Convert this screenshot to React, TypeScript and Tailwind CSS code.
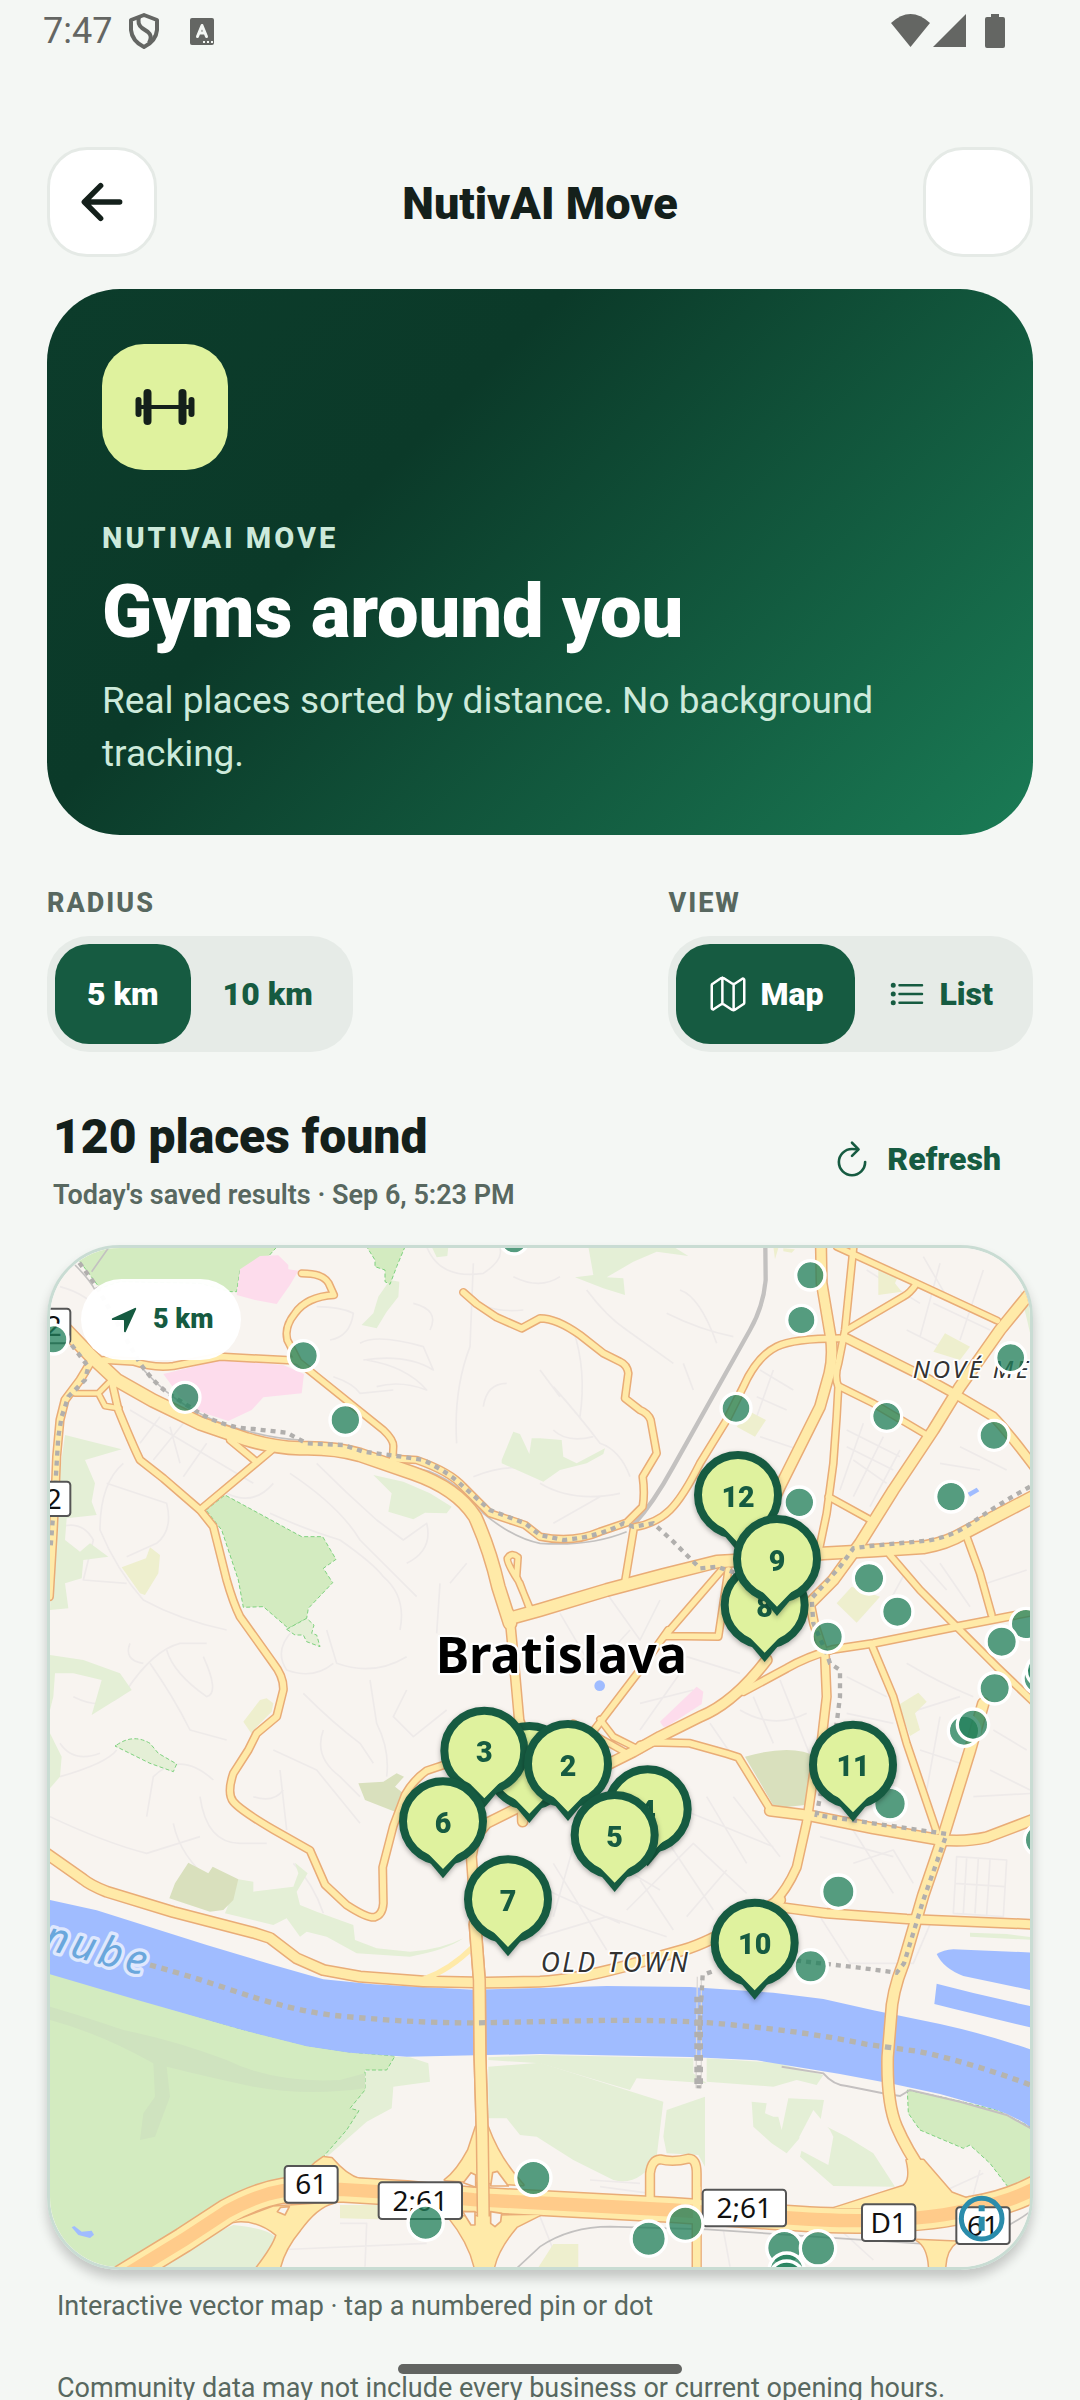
import { useState } from 'react';
import {
  IoArrowBack,
  IoListOutline,
  IoMapOutline,
  IoNavigate,
  IoRefreshOutline,
} from 'react-icons/io5';

interface Pin {
  n: number;
  x: number;
  y: number;
}

// w is the inner width of the road, the casing is drawn a little wider
interface Road {
  d: string;
  w: number;
}

const roads: Road[] = [
  { w: 19, d: 'M150 400 L120 450 L75 510 L60 570 L50 680 L45 800 L40 900 L28 1100' },
  { w: 13, d: 'M105 490 L175 490 L212 452 M175 490 L195 528 L238 535' },
  { w: 18, d: 'M218 465 L235 540 Q280 650 300 690 L370 745 L480 840 L520 890 L560 1050 Q580 1120 600 1160 L700 1300 Q732 1340 730 1380 L710 1460 L650 1510 L625 1560 L580 1630 Q560 1690 580 1715 Q600 1740 700 1799 L810 1861 L855 1964 L920 2025 Q980 2064 1003 2062 Q1028 2055 1030 2020 L1028 1912 L1060 1788 L1095 1695 Q1120 1650 1160 1622 L1220 1602' },
  { w: 17, d: 'M480 840 L695 660 M645 692 L570 630' },
  { w: 17, d: 'M190 390 L280 395 Q340 415 400 408 L540 380 L770 392' },
  { w: 16, d: 'M785 130 Q850 130 866 160 L882 195 Q800 200 765 250 Q732 290 742 330 L775 395 L1030 600 Q1062 630 1060 650 L1058 690' },
  { w: 17, d: 'M1058 686 L1130 690 Q1230 725 1270 770 L1350 850 L1455 885 L1500 920 Q1600 940 1680 905 L1760 878 L1808 830 Q1815 790 1808 740 L1850 670 L1832 570 Q1825 550 1800 540 L1755 505 L1765 430 Q1762 405 1740 395 L1690 370 L1620 315 Q1550 265 1500 265 L1445 295 L1370 262 L1310 222 L1270 187' },
  { w: 15, d: 'M1468 1135 L1440 1060 Q1400 1000 1402 985 Q1415 965 1434 982 L1430 1040 L1470 1135' },
  { w: 17, d: 'M2400 325 Q2260 325 2210 350 Q2150 380 2110 470 L2060 570 L1980 700 Q1930 800 1890 840 Q1850 880 1782 892 L1755 1055' },
  { w: 16, d: 'M2390 50 L2620 155 L2872 272 M2630 160 Q2610 190 2590 200 L2420 300' },
  { w: 17, d: 'M2440 54 L2415 300 L2395 400 Q2382 440 2395 470 L2390 560 L2380 700 L2360 850 L2335 970' },
  { w: 16, d: 'M2395 468 L2500 520 L2655 612 M2365 800 L2492 870' },
  { w: 17, d: 'M2550 975 L2640 1080 L2750 1190 L2870 1310 L2990 1425' },
  { w: 17, d: 'M2780 920 L2820 1030 L2855 1155' },
  { w: 19, d: 'M2990 1143 L2750 1190 L2500 1240 L2380 1258 Q2300 1280 2240 1315 L2110 1385' },
  { w: 17, d: 'M2495 1245 L2560 1400 L2600 1540 L2690 1805' },
  { w: 17, d: 'M1875 1218 L2035 1220 L2065 1020 M1868 1225 L2045 1020 M1885 1200 L1800 1320 L1655 1510' },
  { w: 15, d: 'M1680 1468 L1720 1520 L1800 1560 M1600 1480 L1770 1575 L1840 1537' },
  { w: 18, d: 'M1800 1545 L1840 1537 L1950 1540 L2060 1571 L2095 1582 L2195 1745' },
  { w: 22, d: 'M1830 2904 L1830 2830 Q1835 2790 1860 2788 Q1900 2798 1945 2786 Q1970 2785 1970 2830 L1970 3120' },
  { w: 26, d: 'M1440 1480 L1448 1775 M1440 1730 L1340 1780 Q1300 1820 1294 1880 L1310 2100' },
  { w: 24, d: 'M2210 2030 L2360 2050 L2600 2067 L2980 2083' },
  { w: 28, d: 'M2190 1742 L2310 1757 L2500 1795 L2690 1828 Q2770 1838 2840 1822 L2990 1765' },
  { w: 22, d: 'M2310 1120 L2322 1180 L2355 1280 L2360 1400 L2345 1530 L2320 1640 L2300 1778 L2270 1912 Q2240 1980 2200 2020' },
  { w: 28, d: 'M2220 2010 L2120 2070 Q2000 2140 1930 2160 L1750 2210 Q1600 2250 1500 2255 L1340 2258 L1150 2254 L960 2240 L850 2220 L770 2185 L690 2124 L640 2108 L400 2046 L200 1985 Q150 1965 130 1948 L20 1871' },
  { w: 28, d: 'M2180 1290 Q2080 1420 1980 1460 L1860 1520 L1780 1565 L1690 1610' },
  { w: 28, d: 'M2343 50 L2345 160 L2372 320 Q2380 380 2368 430 L2340 530 L2280 650 L2220 770 L2170 880' },
  { w: 23, d: 'M2420 325 L2500 365 L2650 440 L2750 495 L2860 560 Q2900 600 2990 720' },
  { w: 30, d: 'M2990 165 L2880 300 L2760 470 L2680 600 L2560 780 L2460 940 L2380 1050 L2300 1130' },
  { w: 34, d: 'M1410 1165 L1500 1140 L1700 1080 L1870 1035 L2030 995 L2200 985 L2350 970 L2500 962 L2650 952 Q2720 940 2770 910 L2990 795' },
  { w: 36, d: 'M78 300 L150 375 L230 450 L340 512 L480 580 L620 628 Q700 652 780 655 Q880 652 960 675 L1120 730 Q1250 775 1305 860 Q1350 960 1375 1070 L1410 1180' },
  { w: 24, d: 'M1408 1150 L1425 1330 L1442 1520' },
  { w: 30, d: 'M2830 1420 L2790 1561 L2710 1819 L2650 1995 L2590 2201 Q2555 2290 2553 2360 L2543 2480 Q2540 2620 2570 2690 Q2600 2760 2650 2830' },
];

const motorway =
  'M250 3140 L430 3030 L560 2945 Q650 2895 730 2882 L900 2878 L1100 2890 L1300 2909 L1500 2919 L1900 2940 L2200 2961 Q2400 2975 2500 2971 Q2700 2965 2800 2935 Q2900 2920 2990 2873';

const bridge = 'M1305 2080 L1318 2250 L1320 2480 L1327 2720 L1330 2960';

const junctions = [
  'M1308 2690 L1285 2760 Q1250 2825 1215 2850 L1450 2865 Q1380 2790 1343 2690 Z',
  'M1225 2960 Q1290 3040 1306 3120 L1360 3120 Q1370 3060 1430 2990 L1500 2955 Z',
  'M825 2800 L850 2782 L875 2785 Q920 2838 960 2848 L1010 2850 L900 2880 L740 2880 Z',
  'M580 2975 Q650 2965 710 3015 Q700 3050 645 3120 L718 3120 Q730 3060 780 3000 Q830 2930 880 2918 L700 2930 Z',
  'M2600 2790 Q2615 2850 2590 2868 L2520 2890 L2380 2935 L2860 2935 L2735 2888 L2650 2790 Z',
  'M2630 3030 Q2666 3050 2668 3120 L2715 3120 Q2715 3060 2750 3035 Z',
];

const junctionHoles = [
  'M1270 2858 L1293 2828 L1307 2835 L1307 2872 Z',
  'M1352 2868 L1358 2828 L1372 2824 L1405 2868 Z',
  'M1268 2945 L1305 2945 L1305 2985 L1293 2985 Z',
  'M1352 2945 L1385 2950 L1382 2975 L1365 2990 L1352 2980 Z',
  'M712 2945 L722 2932 L748 2930 L735 2955 Z',
];

const tramLines = [
  'M95 345 L145 410 L135 450 L85 500 L65 560 L55 620 L50 700 L46 770 L32 950',
  'M118 98 L170 170 L300 400 Q350 470 400 500 L480 550 Q560 595 640 597 L740 608 L800 640 L910 645 L970 665 L1070 678 L1150 690 Q1230 730 1270 770 L1350 840 L1455 880 L1500 915 L1570 930 Q1680 920 1750 880 L1780 890 L1840 880 L1900 935 L1980 1015 L2030 1010 L2090 1030',
  'M2970 770 Q2880 820 2800 875 Q2740 920 2660 932 L2490 948 L2440 955 L2400 1010 L2315 1105 L2320 1180 L2360 1270 L2370 1300 L2400 1320 L2400 1400 L2390 1480 L2340 1700 L2330 1755 L2500 1780 L2720 1812 L2650 2010 L2592 2200 L2570 2228 L2450 2212 L2270 2192',
  'M2015 2225 L1988 2235 L1980 2380 L1976 2575',
];

const riverLine =
  'M330 2205 Q440 2235 560 2275 Q760 2345 900 2358 Q1150 2382 1340 2378 L1700 2371 Q1950 2370 2080 2385 Q2300 2405 2480 2443 L2640 2465 Q2800 2500 2980 2568';

const lanes = [
  'M60 170 Q140 190 200 260 M260 330 L240 380 M830 230 Q900 230 940 250 Q930 320 870 330 M960 340 Q1010 310 1150 350 L1180 420 Q1100 370 970 390 M980 390 Q1100 410 1160 480 Q1080 450 1010 470 M1300 100 L1290 350 Q1240 480 1250 640',
  'M1160 50 Q1200 150 1330 130 Q1390 90 1380 55 M1420 140 Q1500 180 1560 140 M1300 200 Q1340 250 1450 240 M880 440 Q940 460 960 490 L1060 480 M1120 220 Q1200 240 1170 300 M1330 530 Q1340 460 1400 460 M1300 740 Q1400 700 1460 720',
  'M270 540 L640 760 M300 640 L360 560 M340 690 L430 580 M430 740 L500 640 M390 590 L420 700 M250 700 Q180 760 180 900 Q230 1020 310 1110 Q420 1170 560 1200 M200 760 L380 820 Q400 900 350 940 L260 980',
  'M560 790 Q640 830 700 760 M690 850 Q800 900 900 930 Q1000 1000 1030 1040 Q1100 1100 1080 1200 M750 730 Q900 830 960 930 L1130 1100 M830 700 Q920 790 1010 870 L1090 930 L1160 880 Q1180 960 1100 1000 M860 1200 L890 1300 Q1000 1340 1100 1280 M1200 1060 L1190 1210 M1280 1000 L1230 1060',
  'M40 900 Q120 860 160 930 L130 1050 L260 1060 M100 1400 Q200 1450 260 1380 Q340 1260 420 1240 L500 1240 M270 1240 Q250 1290 310 1300 M380 1260 Q400 1330 500 1400 Q540 1390 490 1280 M330 1300 Q400 1400 450 1500 L560 1530',
  'M760 1200 Q700 1260 740 1320 Q820 1350 880 1300 M790 1390 Q880 1480 960 1540 L1000 1600 M850 1500 Q820 1580 900 1640 L960 1700 M990 1350 L1010 1480 Q1050 1560 1040 1640 M1100 1380 L1060 1460 L1120 1520 L1220 1440 M700 1560 L830 1620 L960 1780 M640 1700 Q700 1720 730 1680',
  'M60 1540 Q100 1600 180 1570 M60 1640 Q200 1600 230 1560 M30 1760 Q200 1840 320 1870 L480 1820 M320 1760 L340 1640 Q420 1560 520 1650 M400 1780 Q420 1880 520 1960 L620 2000 M480 1700 Q500 1840 600 1840 L680 1840 M720 1620 L740 1800 M760 1900 Q820 1960 850 2050',
  'M1540 470 Q1620 560 1680 640 Q1740 660 1770 740 M1500 420 L1560 500 M1600 300 Q1640 420 1620 560 M1540 600 Q1580 640 1660 620 M1640 180 Q1700 260 1760 300 L1900 400 M1920 180 Q1980 200 2030 340 M1880 250 Q1980 300 2080 320 M1930 400 L1960 480',
  'M1500 760 Q1600 820 1740 790 M1540 880 L1680 800 M2160 420 L2260 480 M2150 500 L2240 540 M2200 420 L2150 560 M2160 620 L2280 660 M2420 600 L2580 680 M2420 650 L2560 720 M2440 690 L2540 760 M2470 580 L2400 780 M2530 620 L2440 800 M2580 660 L2490 830',
  'M2480 120 L2640 220 M2600 300 L2760 380 M2650 80 L2720 200 M2700 100 L2640 320 M2830 120 L2760 330 M2680 220 L2850 300 M2700 700 L2820 720 M2760 650 L2900 720 M2700 1000 L2790 1130 M2640 990 L2720 1080 M2840 1060 L2960 1020 M2600 1020 L2540 1130',
  'M1560 1150 L1660 1320 L1770 1200 M1700 1090 L1800 1230 L1860 1110 M1600 1300 L1740 1240 M1920 1330 L1800 1500 M1940 1280 L2100 1330 M1960 1380 L1800 1420 M2100 1440 Q2200 1500 2300 1450 M2140 1400 L2200 1540 M2220 1350 L2320 1600 M2010 1480 L2120 1640',
  'M2420 1340 L2540 1400 M2420 1450 L2560 1480 M2600 1300 Q2700 1360 2800 1400 M2600 1450 L2760 1400 M2640 1560 L2760 1600 M2700 1460 L2660 1680 M2860 1500 L2960 1560 M2850 1620 L2970 1680 M2800 1700 L2980 1690 M2440 1900 L2560 1860 L2620 1960',
  'M1640 1850 L1860 1980 M1700 1900 L1900 1780 M1760 2040 L1960 1840 L2120 1990 M1860 1800 L2020 2040 M1930 1740 L2200 1850 M2000 1700 L2120 1900 M2080 1700 L2220 1880 M1520 1980 L1740 2080 M1540 1900 L1700 2160 M1600 1850 L1540 2060 M1500 2120 L1700 2060 L1880 2120 M1800 1950 L1900 2100 M2060 1920 L1940 2060',
  'M2750 1880 L2900 1890 L2890 2060 L2740 2050 Z M2780 1885 L2770 2050 M2815 1885 L2805 2050 M2850 1888 L2840 2055 M2745 1960 L2895 1970 M2340 2060 L2430 2200 L2620 2200 L2680 2060 M2420 1770 L2560 1990 M2340 1820 L2560 1880',
  'M1370 2900 L1500 2960 L1560 3110 M900 2980 L980 2980 L975 3110 M700 3060 L1160 3040 M1650 2850 L1800 2860 M1680 2870 L1830 2890 M2050 3000 L2070 3110 M2390 2990 L2500 3090 M2820 2820 L2790 2930 M2720 2880 L2830 2830',
];

const dots: number[][] = [
  [40, 328, 40], [435, 502, 41], [790, 377, 41], [916, 570, 42], [1422, 30, 38],
  [2311, 136, 40], [2284, 270, 40], [2088, 535, 41], [2540, 559, 41], [2912, 383, 41],
  [2862, 616, 41], [2278, 817, 42], [2733, 800, 42], [2487, 1045, 43], [2572, 1145, 43],
  [2363, 1220, 43], [2958, 1182, 43], [2885, 1235, 43], [2996, 1345, 43], [3006, 1322, 43],
  [2864, 1375, 43], [2772, 1502, 43], [2799, 1484, 43], [2550, 1721, 45], [3002, 1830, 45],
  [2395, 1985, 46], [2312, 2209, 46], [1480, 2844, 49], [1157, 2978, 49], [1826, 3026, 49],
  [1936, 2981, 49], [2233, 3054, 49], [2334, 3055, 49], [2240, 3122, 49], [2240, 3146, 49],
];

const pins: Pin[] = [
  { n: 12, x: 2094, y: 795 },
  { n: 8, x: 2174, y: 1125 },
  { n: 9, x: 2211, y: 987 },
  { n: 11, x: 2439, y: 1604 },
  { n: 4, x: 1823, y: 1738 },
  { n: 1, x: 1468, y: 1608 },
  { n: 3, x: 1333, y: 1562 },
  { n: 2, x: 1584, y: 1602 },
  { n: 6, x: 1209, y: 1774 },
  { n: 5, x: 1724, y: 1815 },
  { n: 7, x: 1404, y: 2008 },
  { n: 10, x: 2144, y: 2138 },
];

const shields = [
  { label: '2', x: -8, y: 236, w: 99, h: 104 },
  { label: '2', x: -8, y: 755, w: 99, h: 103 },
  { label: '61', x: 734, y: 2808, w: 159, h: 110 },
  { label: '2;61', x: 1016, y: 2857, w: 250, h: 110 },
  { label: '2;61', x: 1988, y: 2879, w: 250, h: 110 },
  { label: 'D1', x: 2466, y: 2923, w: 160, h: 110 },
  { label: '61', x: 2749, y: 2932, w: 160, h: 110 },
];

function CityMap() {
  return (
    <svg
      viewBox="30 54 2940 3057"
      preserveAspectRatio="xMidYMid slice"
      className="block h-full w-full"
      role="img"
      aria-label="Map of Bratislava"
    >
      <rect x="0" y="0" width="3040" height="3200" fill="#f8f4f0" />

      <g fill="none" stroke="#eeeae9" strokeWidth="5" strokeLinejoin="round">
        {lanes.map((d, i) => (
          <path key={i} d={d} />
        ))}
      </g>

      {/* woods */}
      <g fill="#e4efd6">
        <path d="M1645 50 L1660 135 L1605 142 L1690 175 L1755 195 L1750 145 L1700 142 L1780 95 L1850 65 L1945 78 L1900 50 Z" />
        <path d="M1050 150 L1078 155 L1075 200 L1040 245 L1010 295 L965 285 L1000 250 L1015 200 Z" />
        <path d="M1175 50 L1225 50 L1222 78 L1190 82 Z" />
        <path d="M1385 690 L1420 605 L1440 612 L1468 672 L1475 625 L1500 625 L1565 630 L1570 680 L1610 700 L1695 655 L1690 672 L1640 700 L1560 720 L1510 755 L1385 700 Z" />
        <path d="M1000 735 L1090 755 L1170 790 L1235 830 L1220 850 L1155 848 L1120 868 L1045 845 L1055 790 Z" />
        <path d="M75 615 L245 658 L135 690 L165 760 L155 815 L170 855 L80 865 L75 930 L120 965 L150 940 L205 980 L130 990 L125 1045 L75 1060 L85 1135 L30 1140 L40 860 Z" />
        <path d="M30 1275 L130 1290 L240 1330 L275 1380 L155 1455 L185 1350 L100 1330 L45 1330 L40 1400 L30 1440 Z" />
        <path d="M30 1510 L65 1580 L60 1640 L30 1675 Z" />
        <path d="M595 1948 L640 1955 L640 1985 L760 1970 L775 1930 L765 1898 L803 1930 L770 1985 L780 2025 L830 2045 L940 2085 L945 2130 L1010 2155 L1110 2165 Q1200 2160 1270 2125 Q1220 2160 1110 2180 L950 2170 L860 2120 L800 2105 L780 2120 L740 2065 L700 2085 L555 2050 Z" />
        <path d="M2940 180 L2990 240 L2975 330 Z" />
        <path d="M2790 2108 L2900 2112 L2980 2122 L2980 2130 L2790 2120 Z" />
        <path d="M1345 2482 L1500 2475 L1960 2485 L1960 2530 L2000 2560 L1790 2545 L1770 2580 L1500 2500 L1345 2490 Z" />
        <path d="M2000 2485 L2210 2498 L2350 2535 L2330 2565 L2270 2550 L2200 2570 L2000 2555 Z" />
        <path d="M1345 2510 L1500 2498 L1870 2615 L1850 2780 Q1800 2870 1720 2850 L1600 2790 L1490 2720 L1440 2715 L1400 2665 L1345 2665 Z" />
        <path d="M1880 2640 L1995 2600 L1995 2810 L1975 2775 L1880 2770 L1870 2720 Z" />
        <path d="M2135 2615 L2180 2620 L2175 2650 L2200 2660 L2215 2660 L2225 2700 L2245 2605 L2352 2610 L2340 2680 L2420 2720 L2500 2770 L2565 2870 L2380 2868 L2280 2780 L2300 2700 L2240 2770 L2195 2740 L2140 2690 Z" />
        <path d="M1065 2480 L1110 2482 L1165 2500 L1170 2555 L1060 2570 L1055 2635 L980 2675 L850 2790 L970 2530 Z" />
        <path d="M580 2985 Q680 2995 705 3020 Q690 3060 640 3120 L340 3120 L480 3030 Z" />
      </g>

      {/* fields and pitches */}
      <g fill="#eeefce">
        <path d="M245 1012 L318 985 L330 952 L360 975 L355 1030 L315 1095 L300 1090 Z" />
        <path d="M610 1475 L660 1410 L680 1405 L700 1420 L695 1445 L650 1490 L635 1512 Z" />
        <path d="M2515 115 L2580 125 L2565 160 L2585 185 L2515 195 Z" />
        <path d="M2680 365 L2715 310 L2790 350 L2760 390 Z" />
        <path d="M2090 590 L2130 545 L2178 570 L2145 620 Z" />
        <path d="M2390 1120 L2435 1070 L2520 1100 L2450 1178 Z" />
        <path d="M2575 1425 L2635 1388 L2660 1415 L2625 1450 L2640 1500 L2610 1518 Z" />
        <path d="M2200 50 L2215 55 L2205 88 Z M2230 55 L2265 58 L2255 68 L2230 64 Z" />
        <path d="M900 2925 L1015 2925 L1015 2968 L900 2965 Z" />
        <path d="M1540 3042 L1615 3042 L1615 3120 L1490 3120 Z" />
      </g>
      <path d="M2278 2720 L2320 2640 L2370 2700 L2380 2720 L2365 2805 L2280 2760 Z" fill="#f8f4f0" />

      {/* cemeteries */}
      <g fill="#d9e0bd">
        <path d="M445 1898 L505 1930 L518 1910 L595 1948 L580 2010 L550 2040 L510 2045 L388 2005 L405 1960 Z" />
        <path d="M955 1660 L1030 1655 L1070 1630 L1092 1640 L1065 1670 L1090 1690 L1065 1745 L975 1710 Z" />
        <path d="M2115 1580 Q2220 1550 2290 1565 L2320 1575 L2295 1725 L2205 1735 L2150 1640 Z" />
      </g>

      {/* parks */}
      <g fill="#d3ebc0" stroke="#7fd17f" strokeWidth="3" strokeDasharray="12 7">
        <path d="M90 40 L720 40 L680 85 L600 120 L590 185 L570 185 L480 160 L240 155 L180 175 L120 95 Z" />
        <path d="M980 50 L1095 50 L1070 110 L1050 163 L1035 155 L1035 120 L1005 110 L1005 90 Z" />
        <path d="M498 840 L555 795 L785 920 L848 920 L888 988 L850 1015 L878 1058 L805 1135 L800 1165 L745 1195 L670 1130 L610 1132 L595 1050 L545 900 Z" />
        <path d="M740 1198 L800 1165 L822 1185 L815 1210 L830 1215 L840 1250 L800 1235 L790 1215 L765 1215 Z" fill="#e4efd6" />
        <path d="M230 1545 Q280 1510 330 1540 L355 1570 L410 1602 L400 1625 L330 1600 L225 1548 Z" fill="#e4efd6" />
        <path d="M20 2225 L300 2308 L600 2396 L800 2446 L930 2466 L1065 2478 L1040 2520 L975 2520 L975 2580 L930 2635 L957 2642 L920 2700 L850 2780 L800 2860 L560 2945 L250 3140 L20 3140 Z" />
        <path d="M2602 2580 L2700 2600 L2870 2640 L2990 2700 L2990 2860 L2915 2885 L2850 2800 L2790 2745 L2770 2755 L2640 2700 L2605 2650 Z" />
      </g>
      <path
        d="M30 2330 Q150 2365 250 2400 Q400 2430 560 2490 Q700 2560 900 2550 L975 2530 L975 2575 Q800 2600 640 2570 Q500 2540 380 2510 L390 2600 L345 2720 L300 2730 L310 2650 L345 2600 L340 2500 Q180 2410 30 2370 Z"
        fill="#cfe3bf"
      />

      {/* hospitals */}
      <g fill="#fddcec">
        <path d="M600 118 L660 78 L715 76 L745 105 L745 118 L775 122 L750 165 L710 222 L645 210 L590 195 Z" />
        <path d="M370 432 L480 405 L540 388 L730 405 L792 432 L785 490 L670 502 L635 540 L565 573 L480 545 L420 500 Z" />
        <path d="M1860 1475 L1970 1370 L1990 1385 L1985 1422 L1880 1490 L1870 1490 Z" />
      </g>

      {/* water */}
      <g fill="#a0bcff">
        <path d="M20 2008 L170 2041 L500 2145 L700 2205 L850 2248 L1000 2263 L1300 2279 L1500 2274 L1700 2268 L1950 2271 L2200 2288 L2350 2307 L2500 2341 L2700 2382 Q2850 2415 2990 2465 L2990 2705 Q2940 2665 2870 2640 L2700 2592 L2560 2562 L2400 2532 L2150 2491 L1950 2481 L1500 2472 L1100 2480 L930 2468 L800 2449 L600 2398 L300 2312 L20 2230 Z" />
        <path d="M2690 2172 Q2710 2160 2740 2158 L2990 2168 L2990 2284 L2770 2238 Q2710 2215 2690 2172 Z" />
        <path d="M2690 2261 L2800 2289 L2990 2333 L2990 2397 L2740 2336 L2683 2322 Z" />
        <circle cx="1679" cy="1367" r="16" />
        <path d="M2783 788 L2810 773 L2818 784 L2790 800 Z" />
        <path d="M95 2992 L103 2988 L125 3005 L155 3002 L162 3014 L150 3024 L115 3015 Z" />
      </g>
      <path d="M2225 2510 L2350 2530 Q2380 2565 2420 2568 L2540 2592 L2580 2598 L2610 2580 L2760 2615 L2900 2655 L2990 2705" fill="none" stroke="#c4c0c0" strokeWidth="6" />

      {/* railways */}
      <g fill="none" stroke="#c3c1c0">
        <path d="M205 54 L155 125 M105 105 Q150 150 165 180 M290 395 Q400 530 560 585 Q680 625 780 630 M1070 700 L1170 725 Q1260 760 1330 850 Q1420 925 1500 940 Q1650 950 1760 905" strokeWidth="5" />
        <path d="M2176 50 L2177 150 Q2170 230 2130 300 L1900 710 Q1840 820 1780 885" strokeWidth="13" />
        <path d="M1430 3115 L1500 3050 Q1590 2990 1710 2990 L2000 2998 L2400 3025 L2700 3045 Q2850 3040 2990 2930" strokeWidth="5" />
        <path d="M1972 2240 L1968 2575 M1984 2240 L1984 2575" stroke="#ddd9d6" strokeWidth="4" />
      </g>

      {/* roads: casings first so that the crossings stay open */}
      <g fill="none" stroke="#e9ac77" strokeLinejoin="round" strokeLinecap="round">
        {roads.map((r, i) => (
          <path key={i} d={r.d} strokeWidth={r.w + 9} />
        ))}
        <path d={motorway} strokeWidth="80" />
        <g strokeWidth="9">
          {junctions.map((d, i) => (
            <path key={i} d={d} />
          ))}
        </g>
        <path d={bridge} strokeWidth="40" />
      </g>
      <g fill="none" stroke="#ffeaa8" strokeLinejoin="round" strokeLinecap="round">
        {roads.map((r, i) => (
          <path key={i} d={r.d} strokeWidth={r.w} />
        ))}
        <path d="M1150 2248 Q1230 2220 1300 2150" strokeWidth="16" />
        <path d={motorway} strokeWidth="71" />
      </g>
      <g fill="#ffeaa8">
        {junctions.map((d, i) => (
          <path key={i} d={d} />
        ))}
      </g>
      <path d={motorway} fill="none" stroke="#ffcb8a" strokeWidth="40" />
      <path d={bridge} fill="none" stroke="#e9ac77" strokeWidth="40" />
      <path d={bridge} fill="none" stroke="#ffeaa8" strokeWidth="31" strokeLinecap="round" />
      <path d="M1970 2870 L1970 3120" fill="none" stroke="#ffeaa8" strokeWidth="22" />
      <g fill="#f8f4f0" stroke="#e9ac77" strokeWidth="5" strokeLinejoin="round">
        {junctionHoles.map((d, i) => (
          <path key={i} d={d} />
        ))}
      </g>

      <g fill="none" stroke="#b1afad" strokeWidth="13" strokeDasharray="15 15">
        {tramLines.map((d, i) => (
          <path key={i} d={d} />
        ))}
      </g>
      <path d="M1976 2300 L1976 2575" fill="none" stroke="#b1afad" strokeWidth="26" strokeDasharray="17 18" />
      <path d={riverLine} fill="none" stroke="#b6b4ae" strokeWidth="16" strokeDasharray="19 17" />

      {/* road shields */}
      <g fontFamily="'Noto Sans', sans-serif" fontSize="84" textAnchor="middle">
        {shields.map((s, i) => (
          <g key={i}>
            <rect x={s.x} y={s.y} width={s.w} height={s.h} rx="10" fill="#fff" stroke="#555" strokeWidth="6" />
            <text x={s.x + s.w / 2} y={s.y + s.h / 2 + 30} fill="#111">
              {s.label}
            </text>
          </g>
        ))}
      </g>

      {/* place names */}
      <g fontFamily="'Noto Sans', sans-serif" stroke="#fff" strokeLinejoin="round" paintOrder="stroke">
        <text x="1187" y="1330" fontSize="151" fontWeight="700" fill="#000" strokeWidth="14">
          Bratislava
        </text>
        <g fontStyle="italic">
          <text x="2618" y="444" fontSize="73" letterSpacing="8" fill="#333" strokeWidth="10">
            NOVÉ MESTO
          </text>
          <text x="1502" y="2226" fontSize="79" letterSpacing="8" fill="#333" strokeWidth="10">
            OLD TOWN
          </text>
          <text
            transform="translate(320 2240) rotate(15)"
            fontSize="124"
            letterSpacing="12"
            textAnchor="end"
            fill="#6aa7dc"
            stroke="#dfe8fd"
            strokeWidth="20"
          >
            Danube
          </text>
        </g>
      </g>

      {/* remaining places */}
      {dots.map(([x, y, r], i) => (
        <g key={i}>
          <circle cx={x} cy={y} r={r} fill="#217f5b" fillOpacity="0.76" />
          <circle cx={x} cy={y} r={r + 4} fill="none" stroke="#fff" strokeWidth="10" />
        </g>
      ))}

      {/* nearest places, numbered */}
      <g fontFamily="Roboto, sans-serif" fontSize="86" fontWeight="900" textAnchor="middle">
        {pins.map((p) => (
          <g
            key={p.n}
            transform={`translate(${p.x} ${p.y})`}
            className="cursor-pointer drop-shadow-[0_6px_8px_rgba(0,0,0,0.3)]"
          >
            <path d="M-56 104 L0 171 L56 104 Z" fill="#165b41" />
            <circle r="120" fill="#dff29e" stroke="#165b41" strokeWidth="24" />
            <path d="M-50 92 L-37 105 L0 143 L37 105 L50 92 Z" fill="#dff29e" />
            <text y="35" fill="#165b41">
              {p.n}
            </text>
          </g>
        ))}
      </g>

      <g fill="none" stroke="#2a8cab">
        <circle cx="2825" cy="2966" r="61" strokeWidth="15" />
        <path d="M2825 2960 L2825 3002" strokeWidth="18" />
        <path d="M2825 2926 L2825 2944" strokeWidth="18" />
      </g>
    </svg>
  );
}

function StatusBar() {
  return (
    <div className="flex h-[62px] items-center px-[43px] text-[#646663]">
      <span className="text-[36px] leading-[62px]">7:47</span>
      <svg viewBox="0 0 30 36" className="ml-[17px] h-9 w-[30px]" fill="none" stroke="currentColor" strokeWidth="4" strokeLinejoin="round">
        <path d="M15 2 L28 7 V17 Q27 28 15 34 Q3 28 2 17 V7 Z" />
        <path d="M10 4 Q8 11 13 15 L19 19 Q24 23 20 30" />
      </svg>
      <svg viewBox="0 0 24 27" className="ml-[31px] h-[27px] w-6">
        <rect width="24" height="27" rx="2" fill="currentColor" />
        <path d="M7.500 18.500 L12 7.500 L16.500 18.500 M9 15 H15" fill="none" stroke="#f4f7f4" strokeWidth="3" strokeLinecap="round" strokeLinejoin="round" />
        <path d="M13 24 H15 M17 24 H19 M21 24 H23" stroke="#f4f7f4" strokeWidth="2" />
      </svg>
      <svg viewBox="0 0 115 34" className="mr-[31px] ml-auto h-[34px] w-[115px]" fill="currentColor">
        <path d="M0 9 Q19.500 -9 39 9 L19.500 33 Z" />
        <path d="M75 0 V33 H42 Z" />
        <path d="M100 0 H108 V3 H112 Q114 3 114 5 V32 Q114 34 112 34 H96 Q94 34 94 32 V5 Q94 3 96 3 H100 Z" />
      </svg>
    </div>
  );
}

function Barbell() {
  return (
    <svg viewBox="0 0 60 36" className="h-9 w-[60px]" fill="#14201b">
      <rect x="0.500" y="8" width="6" height="20" rx="3" />
      <rect x="8.500" y="0" width="8" height="36" rx="4" />
      <rect x="43.500" y="0" width="8" height="36" rx="4" />
      <rect x="53.500" y="8" width="6" height="20" rx="3" />
      <rect x="3" y="16" width="54" height="4" />
    </svg>
  );
}

export default function App() {
  const [radius, setRadius] = useState(5);
  const [view, setView] = useState('map');

  const tab = 'flex h-[100px] items-center gap-3 rounded-[34px] px-8 text-[32px] font-black';
  const active = ' bg-[#165b41] text-white';
  const idle = ' text-[#165b41]';

  return (
    <div className="relative h-screen overflow-hidden bg-[#f4f7f4] font-['Roboto',sans-serif] text-[#14201b]">
      <StatusBar />

      <main className="px-[47px]">
        <header className="mt-[85px] flex items-center justify-between">
          <button
            aria-label="Back"
            className="flex size-[110px] items-center justify-center rounded-[40px] border-[3px] border-[#e5eae6] bg-white"
          >
            <IoArrowBack className="size-[58px]" />
          </button>
          <h1 className="pt-1 text-[45px] font-black">NutivAI Move</h1>
          <div className="size-[110px] rounded-[40px] border-[3px] border-[#e5eae6] bg-white" />
        </header>

        {/* Hero */}
        <section className="mt-8 rounded-[73px] bg-[linear-gradient(135deg,#0c3c2b_0%,#0b3a29_34%,#1a7b55_100%)] p-[55px]">
          <div className="flex size-[126px] items-center justify-center rounded-[42px] bg-[#dff29e]">
            <Barbell />
          </div>
          <p className="mt-[50px] text-[29px] leading-9 font-extrabold tracking-[3px] text-[#cdeadb]">NUTIVAI MOVE</p>
          <h2 className="mt-[14px] text-[74px] leading-[84px] font-black text-white">Gyms around you</h2>
          <p className="mt-5 text-[37px] leading-[53px] text-[#cdeadb]">
            Real places sorted by distance. No background tracking.
          </p>
        </section>

        {/* Filters */}
        <div className="mt-[51px] flex justify-between">
          <div>
            <p className="text-[27px] leading-[34px] font-extrabold tracking-[2px] text-[#586860]">RADIUS</p>
            <div className="mt-4 flex rounded-[42px] bg-[#e6ebe7] p-2">
              <button onClick={() => setRadius(5)} className={tab + (radius === 5 ? active : idle)}>
                5 km
              </button>
              <button onClick={() => setRadius(10)} className={tab + (radius === 10 ? active : idle)}>
                10 km
              </button>
            </div>
          </div>
          <div>
            <p className="text-[27px] leading-[34px] font-extrabold tracking-[2px] text-[#586860]">VIEW</p>
            <div className="mt-4 flex rounded-[42px] bg-[#e6ebe7] p-2">
              <button onClick={() => setView('map')} className={tab + (view === 'map' ? active : idle)}>
                <IoMapOutline className="size-10" />
                Map
              </button>
              <button onClick={() => setView('list')} className={tab + (view === 'list' ? active : idle)}>
                <IoListOutline className="size-10" />
                List
              </button>
            </div>
          </div>
        </div>

        {/* Results */}
        <div className="mt-14 flex items-center justify-between">
          <div className="pl-[6px]">
            <h2 className="text-[48px] leading-[58px] font-black">120 places found</h2>
            <p className="mt-[11px] text-[27px] leading-9 font-semibold text-[#586860]">
              Today's saved results · Sep 6, 5:23 PM
            </p>
          </div>
          <button className="flex items-center gap-[14px] px-8 pb-1 text-[32px] font-black text-[#165b41]">
            <IoRefreshOutline className="size-[42px]" />
            Refresh
          </button>
        </div>

        <div className="relative mt-8 h-[1025px] overflow-hidden rounded-[73px] border-[3px] border-[#c9dcd3] shadow-[0_8px_12px_rgba(0,0,0,0.2)]">
          <CityMap />
          <div className="absolute top-[31px] left-[31px] flex h-[81px] items-center gap-[14px] rounded-full bg-white/97 px-7 text-[27px] font-black text-[#165b41]">
            <IoNavigate className="size-[30px]" />
            5 km
          </div>
        </div>

        <p className="mt-[18px] px-[10px] text-[27px] leading-9 text-[#586860]">
          Interactive vector map · tap a numbered pin or dot
        </p>
        <p className="mt-[46px] px-[10px] text-[27px] leading-9 text-[#586860]">
          Community data may not include every business or current opening hours.
        </p>
      </main>

      <div className="absolute bottom-[26px] left-1/2 h-[10px] w-[284px] -translate-x-1/2 rounded-full bg-[#626461]" />
    </div>
  );
}
